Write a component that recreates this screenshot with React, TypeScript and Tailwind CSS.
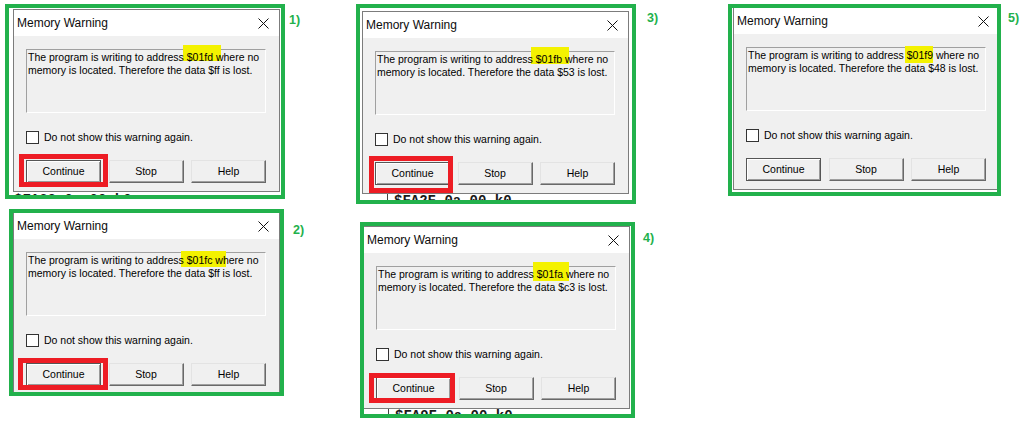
import React from "react";

const sans = "font-['Liberation_Sans',Arial,sans-serif]";

type Cfg = {
  frame: string;
  dlg: string;
  hl: string;
  red?: string;
  addr: string;
  data: string;
  code?: "a" | "b" | "c";
  label: string;
  labelCls: string;
  rowCls: string;
};

function CloseX() {
  return (
    <svg width="11" height="11" viewBox="0 0 11 11" className="block">
      <path d="M0.5 0.5 L10.5 10.5 M10.5 0.5 L0.5 10.5" stroke="#111" strokeWidth="1" fill="none" />
    </svg>
  );
}

function Btn({ label, def, red }: { label: string; def?: boolean; red?: string }) {
  return (
    <div className="relative">
      <div
        className={
          def
            ? "flex h-[23px] w-[75px] items-center justify-center bg-[#f0f0f0] text-[10.5px] text-black border border-[#555] shadow-[inset_1px_1px_0_#fff,inset_-1px_-1px_0_#9a9a9a]"
            : "flex h-[23px] w-[75px] items-center justify-center bg-[#f0f0f0] text-[10.5px] text-black border border-t-[#e3e3e3] border-l-[#e3e3e3] border-r-[#696969] border-b-[#696969] shadow-[inset_-1px_-1px_0_#a0a0a0]"
        }
      >
        {label}
      </div>
      {red ? <div className={`absolute border-[5px] border-[#ed1c24] ${red}`} /> : null}
    </div>
  );
}

function Code({ kind }: { kind: "a" | "b" | "c" }) {
  if (kind === "a") {
    return (
      <div className="flex h-[20px] font-['Liberation_Mono',monospace] text-[14px] font-bold leading-[14px] text-[#1a1a1a]">
        <div className="ml-[1px] mt-[1px]">$FA2C 0a 00 k0</div>
      </div>
    );
  }
  return (
    <div className="flex h-[20px] font-['Liberation_Mono',monospace] text-[14px] font-bold leading-[14px] text-[#1a1a1a]">
      <div className="w-[25px] shrink-0" />
      <div className="border-l border-[#444] pl-[6px]">
        <div className="mt-[0px]">{kind === "b" ? "$FA2F 0a 00 k0" : "$FA9F 0a 00 k0"}</div>
      </div>
    </div>
  );
}

function Dialog({ c }: { c: Cfg }) {
  return (
    <div className={`relative shrink-0 overflow-hidden border-4 border-[#22b14c] bg-white ${c.frame}`}>
      <div className={`w-[267px] ${c.dlg}`}>
        <div className="border border-[#7c7c7c]">
          <div className="flex h-[26px] items-center justify-between bg-white pl-[3px] pr-[10px]">
            <span className={`${sans} text-[12px] text-[#0c0c0c]`}>Memory Warning</span>
            <CloseX />
          </div>
          <div className={`${sans} bg-[#f0f0f0] pl-[12px] pt-[13px] pb-[8px] text-[10.5px] text-black`}>
            <div className="relative h-[64px] w-[240px] border border-t-[#a0a0a0] border-l-[#a0a0a0] border-r-white border-b-white pl-[1px] pt-[1px] leading-[13px]">
              <div className={`absolute bg-[#f4f200] ${c.hl}`} />
              <div className="relative whitespace-nowrap">
                The program is writing to address {c.addr} where no
                <br />
                memory is located. Therefore the data {c.data} is lost.
              </div>
            </div>
            <div className="mt-[18px] flex h-[13px] items-center">
              <div className="h-[13px] w-[13px] border border-[#333] bg-white" />
              <span className="ml-[5px] leading-[13px]">Do not show this warning again.</span>
            </div>
            <div className="mt-[16px] flex w-[240px] justify-between">
              <Btn label="Continue" def red={c.red} />
              <Btn label="Stop" />
              <Btn label="Help" />
            </div>
          </div>
        </div>
        {c.code ? <Code kind={c.code} /> : null}
      </div>
    </div>
  );
}

function Row({ c }: { c: Cfg }) {
  return (
    <div className={`flex items-start ${c.rowCls}`}>
      <Dialog c={c} />
      <div className={`${sans} text-[12.5px] font-bold leading-none text-[#22b14c] ${c.labelCls}`}>{c.label}</div>
    </div>
  );
}

const b1: Cfg = {
  frame: "w-[280px] h-[195px]",
  dlg: "ml-[4px] mt-[1px]",
  hl: "left-[156px] top-[-5px] w-[38px] h-[16px]",
  red: "left-[-7px] top-[-6px] w-[89px] h-[33px]",
  addr: "$01fd",
  data: "$ff",
  code: "a",
  label: "1)",
  labelCls: "ml-[4px] mt-[10px]",
  rowCls: "ml-[5px] mt-[4px]",
};
const b2: Cfg = {
  frame: "w-[275px] h-[187px]",
  dlg: "ml-[0px] mt-[-1px]",
  hl: "left-[154px] top-[-2px] w-[45px] h-[16px]",
  red: "left-[-8px] top-[-5px] w-[90px] h-[32px]",
  addr: "$01fc",
  data: "$ff",
  label: "2)",
  labelCls: "ml-[9px] mt-[15px]",
  rowCls: "ml-[9px] mt-[10px]",
};
const b3: Cfg = {
  frame: "w-[280px] h-[200px]",
  dlg: "ml-[2px] mt-[3px]",
  hl: "left-[155px] top-[-5px] w-[38px] h-[17px]",
  red: "left-[-6px] top-[-6px] w-[84px] h-[37px]",
  addr: "$01fb",
  data: "$53",
  code: "b",
  label: "3)",
  labelCls: "ml-[11px] mt-[8px]",
  rowCls: "ml-[6px] mt-[4px]",
};
const b4: Cfg = {
  frame: "w-[275px] h-[196px]",
  dlg: "ml-[-1px] mt-[0px]",
  hl: "left-[156px] top-[-5px] w-[36px] h-[19px]",
  red: "left-[-7px] top-[-4px] w-[86px] h-[30px]",
  addr: "$01fa",
  data: "$c3",
  code: "c",
  label: "4)",
  labelCls: "ml-[8px] mt-[10px]",
  rowCls: "ml-[10px] mt-[18px]",
};
const b5: Cfg = {
  frame: "w-[273px] h-[192px]",
  dlg: "ml-[1px] mt-[-1px]",
  hl: "left-[158px] top-[-2px] w-[28px] h-[17px]",
  addr: "$01f9",
  data: "$48",
  label: "5)",
  labelCls: "ml-[7px] mt-[8px]",
  rowCls: "ml-[8px] mt-[4px]",
};

export default function App() {
  return (
    <div className="flex h-[434px] w-[1031px] overflow-hidden bg-white">
      <div className="flex w-[350px] shrink-0 flex-col">
        <Row c={b1} />
        <Row c={b2} />
      </div>
      <div className="flex w-[370px] shrink-0 flex-col">
        <Row c={b3} />
        <Row c={b4} />
      </div>
      <div className="flex flex-col">
        <Row c={b5} />
      </div>
    </div>
  );
}
